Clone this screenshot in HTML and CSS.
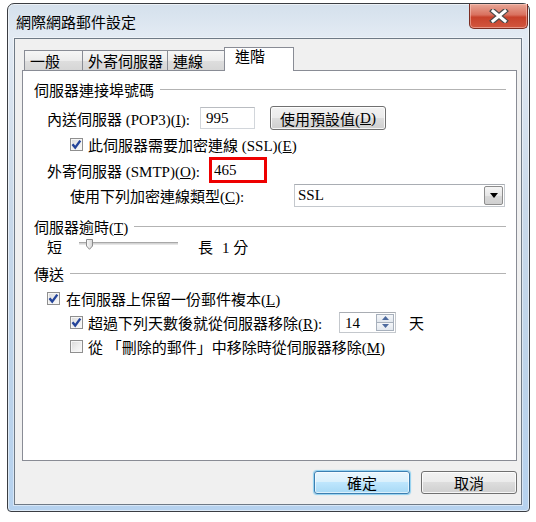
FILE: index.html
```html
<!DOCTYPE html>
<html lang="zh-Hant">
<head>
    <meta charset="UTF-8">
    <title>網際網路郵件設定</title>
    <link rel="stylesheet" href="styles.css">
</head>
<body>
    <div class="window">
        <div class="titlebar">
            <span class="title">網際網路郵件設定</span>
            <div class="close-btn">
                <svg width="20" height="14" viewBox="0 0 20 14">
                    <path d="M4 2 L16 12 M16 2 L4 12" stroke="#4a4a4a" stroke-width="5.5" stroke-linecap="square"/>
                    <path d="M4 2 L16 12 M16 2 L4 12" stroke="#ffffff" stroke-width="3" stroke-linecap="square"/>
                </svg>
            </div>
        </div>

        <div class="client">
            <div class="tabs">
                <div class="tab tab-general">一般</div>
                <div class="tab tab-outgoing">外寄伺服器</div>
                <div class="tab tab-conn">連線</div>
                <div class="tab tab-advanced active">進階</div>
            </div>

            <div class="panel">
                <div class="group-title"><span>伺服器連接埠號碼</span><i class="rule"></i></div>

                <div class="row row-pop">
                    <span class="label label-pop">內送伺服器 (POP3)(<u>I</u>):</span>
                    <div class="textbox">995</div>
                    <div class="btn btn-defaults">使用預設值(<u>D</u>)</div>
                </div>

                <div class="row row-ssl">
                    <span class="check checked">
                        <svg width="11" height="11" viewBox="0 0 11 11"><path d="M1.5 5.2 L4.2 8.6 L9.3 1.6" fill="none" stroke="#24449a" stroke-width="2.4"/></svg>
                    </span>
                    <span>此伺服器需要加密連線 (SSL)(<u>E</u>)</span>
                </div>

                <div class="row row-smtp">
                    <span class="label label-smtp">外寄伺服器 (SMTP)(<u>O</u>):</span>
                    <div class="textbox marked">465</div>
                </div>

                <div class="row row-enc">
                    <span class="label label-enc">使用下列加密連線類型(<u>C</u>):</span>
                    <div class="select">
                        <span>SSL</span>
                        <span class="select-arrow">
                            <svg width="8" height="5" viewBox="0 0 8 5"><path d="M0 0 H8 L4 5 Z" fill="#000"/></svg>
                        </span>
                    </div>
                </div>

                <div class="group-title group-timeout"><span>伺服器逾時(<u>T</u>)</span><i class="rule"></i></div>

                <div class="row row-slider">
                    <span>短</span>
                    <div class="slider">
                        <div class="track"></div>
                        <svg class="thumb" width="7" height="11" viewBox="0 0 7 11">
                            <defs>
                                <linearGradient id="thumbFill" x1="0" y1="0" x2="1" y2="0">
                                    <stop offset="0" stop-color="#fbfbfb"/>
                                    <stop offset="1" stop-color="#d4d4d4"/>
                                </linearGradient>
                            </defs>
                            <path d="M0.5 0.5 H6.5 V7 L3.5 10.3 L0.5 7 Z" fill="url(#thumbFill)" stroke="#8c8c8c"/>
                        </svg>
                    </div>
                    <span class="long">長</span>
                    <span class="minutes">1 分</span>
                </div>

                <div class="group-title group-send"><span>傳送</span><i class="rule"></i></div>

                <div class="row row-keep">
                    <span class="check checked">
                        <svg width="11" height="11" viewBox="0 0 11 11"><path d="M1.5 5.2 L4.2 8.6 L9.3 1.6" fill="none" stroke="#24449a" stroke-width="2.4"/></svg>
                    </span>
                    <span>在伺服器上保留一份郵件複本(<u>L</u>)</span>
                </div>

                <div class="row row-days">
                    <span class="check checked">
                        <svg width="11" height="11" viewBox="0 0 11 11"><path d="M1.5 5.2 L4.2 8.6 L9.3 1.6" fill="none" stroke="#24449a" stroke-width="2.4"/></svg>
                    </span>
                    <span class="label label-days">超過下列天數後就從伺服器移除(<u>R</u>):</span>
                    <div class="spinner">
                        <span class="spin-value">14</span>
                        <span class="spin-btns">
                            <span class="spin-up"><svg width="7" height="4" viewBox="0 0 7 4"><path d="M0 4 L3.5 0 L7 4 Z" fill="#4d6a9e"/></svg></span>
                            <span class="spin-down"><svg width="7" height="4" viewBox="0 0 7 4"><path d="M0 0 L3.5 4 L7 0 Z" fill="#4d6a9e"/></svg></span>
                        </span>
                    </div>
                    <span class="days-unit">天</span>
                </div>

                <div class="row row-deleted">
                    <span class="check"></span>
                    <span>從 「刪除的郵件」中移除時從伺服器移除(<u>M</u>)</span>
                </div>
            </div>

            <div class="actions">
                <div class="btn btn-dialog btn-ok">確定</div>
                <div class="btn btn-dialog">取消</div>
            </div>
        </div>
    </div>
</body>
</html>
```

FILE: styles.css
```css
body {
    margin: 0;
    background: #ffffff;
    font-family: "Liberation Serif", "Noto Sans CJK TC", serif;
    font-size: 15px;
    color: #000;
}

u {
    text-decoration: underline;
    text-underline-offset: 1px;
}

.window {
    margin: 3px 0 0 7px;
    width: 523px;
    height: 509px;
    box-sizing: border-box;
    border: 1px solid #3a3d42;
    border-radius: 7px 7px 4px 4px;
    background: linear-gradient(180deg, #d4e0ec 0%, #e2eaf3 6%, #c9d9ea 40%, #bcd3ea 75%, #b6d2ef 100%);
    box-shadow: inset 0 0 0 1px rgba(255, 255, 255, 0.55);
    display: flex;
    flex-direction: column;
}

.titlebar {
    height: 34px;
    display: flex;
    justify-content: space-between;
    padding: 0 1px 0 8px;
}

.title {
    font-size: 15px;
    padding-top: 10px;
    line-height: 18px;
}

.close-btn {
    width: 59px;
    height: 25px;
    box-sizing: border-box;
    border: 1px solid #7b2d22;
    border-top: none;
    border-radius: 0 0 5px 5px;
    background: linear-gradient(180deg, #e8a797 0%, #d9715f 45%, #c7412b 55%, #d2573f 100%);
    box-shadow: inset 0 0 0 1px rgba(255, 210, 200, 0.5);
    display: flex;
    align-items: center;
    justify-content: center;
}

.client {
    flex: 1;
    margin: 0 7px 6px 6px;
    border: 1px solid #6f7a86;
    background: #f0f0f0;
    box-shadow: 0 0 0 1px rgba(255, 255, 255, 0.45);
    padding: 8px 4px 0 7px;
    display: flex;
    flex-direction: column;
}

/* tabs */
.tabs {
    height: 23px;
    display: flex;
    align-items: flex-end;
    padding-left: 2px;
}

.tab {
    height: 20px;
    box-sizing: border-box;
    border: 1px solid #898c95;
    border-bottom: none;
    background: linear-gradient(180deg, #f6f6f6 0%, #ececec 50%, #dedede 51%, #d6d6d6 100%);
    padding: 3px 0 0 5px;
    line-height: 17px;
    margin-right: -1px;
}

.tab-general { width: 59px; }
.tab-outgoing { width: 86px; }
.tab-conn { width: 58px; }

.tab.active {
    width: 70px;
    height: 24px;
    margin: 0 0 -1px 0;
    background: #ffffff;
    padding: 1px 0 0 10px;
    position: relative;
    z-index: 1;
}

.panel {
    height: 391px;
    box-sizing: border-box;
    border: 1px solid #898c95;
    background: #ffffff;
    padding: 8px 10px 0 11px;
}

.group-title {
    height: 20px;
    display: flex;
    align-items: center;
}

.rule {
    flex: 1;
    height: 1px;
    margin-left: 6px;
    background: #b3b3b3;
}

.row {
    display: flex;
    align-items: center;
    height: 24px;
}

.label {
    flex-shrink: 0;
    white-space: nowrap;
}

/* server ports */
.row-pop {
    height: 26px;
    margin-top: 6px;
    padding-left: 13px;
}

.label-pop { width: 153px; }

.textbox {
    width: 55px;
    height: 22px;
    box-sizing: border-box;
    border: 1px solid #d2d6db;
    border-top-color: #b9bcc1;
    padding: 1px 0 0 5px;
    line-height: 19px;
    background: #fff;
}

.btn {
    box-sizing: border-box;
    border: 1px solid #707070;
    border-radius: 3px;
    background: linear-gradient(180deg, #f2f2f2 0%, #ebebeb 49%, #dddddd 50%, #cfcfcf 100%);
    box-shadow: inset 0 0 0 1px rgba(255, 255, 255, 0.8);
    display: flex;
    align-items: center;
    justify-content: center;
    white-space: nowrap;
}

.btn-defaults {
    width: 116px;
    height: 24px;
    margin-left: 15px;
}

.row-ssl {
    height: 26px;
    padding-left: 36px;
}

.check {
    width: 13px;
    height: 13px;
    box-sizing: border-box;
    border: 1px solid #8f8f8f;
    background: linear-gradient(135deg, #d9d9d9 0%, #eeeeee 55%, #fbfbfb 100%);
    box-shadow: inset 0 0 0 1px #f6f6f6;
    margin-right: 5px;
    flex-shrink: 0;
    display: flex;
    align-items: center;
    justify-content: center;
}

.check svg {
    display: block;
}

.row-smtp {
    height: 26px;
    padding-left: 13px;
}

.label-smtp { width: 162px; }

.textbox.marked {
    width: 58px;
    height: 26px;
    border: 3px solid #ee0000;
    padding: 0 0 0 2px;
    line-height: 20px;
}

.row-enc {
    padding-left: 36px;
}

.label-enc { width: 224px; }

.select {
    width: 211px;
    height: 23px;
    box-sizing: border-box;
    border: 1px solid #c4c8cd;
    border-top-color: #a9adb3;
    background: #fff;
    display: flex;
    align-items: center;
    justify-content: space-between;
    padding: 0 1px 0 3px;
}

.select-arrow {
    width: 19px;
    height: 19px;
    box-sizing: border-box;
    border: 1px solid #8d8d8d;
    border-radius: 2px;
    background: linear-gradient(180deg, #f5f5f5 0%, #e7e7e7 50%, #d9d9d9 51%, #d0d0d0 100%);
    display: flex;
    align-items: center;
    justify-content: center;
}

/* timeout */
.group-timeout {
    margin-top: 9px;
}

.row-slider {
    height: 20px;
    padding-left: 13px;
}

.slider {
    width: 99px;
    height: 20px;
    margin-left: 17px;
    position: relative;
}

.track {
    margin-top: 6px;
    height: 3px;
    box-sizing: border-box;
    border-top: 1px solid #a8a8a8;
    border-bottom: 1px solid #e6e6e6;
    background: #d4d4d4;
}

.thumb {
    position: absolute;
    left: 7px;
    top: 3px;
}

.long {
    margin-left: 20px;
}

.minutes {
    margin-left: 9px;
}

/* send */
.group-send {
    margin-top: 7px;
}

.row-keep {
    margin-top: 3px;
    padding-left: 13px;
}

.row-keep .check {
    margin-right: 6px;
}

.row-days {
    padding-left: 36px;
}

.label-days { width: 251px; }

.spinner {
    width: 57px;
    height: 21px;
    box-sizing: border-box;
    border: 1px solid #c4c8cd;
    border-top-color: #a9adb3;
    background: #fff;
    display: flex;
    justify-content: space-between;
    padding: 1px;
}

.spin-value {
    padding-left: 4px;
    line-height: 18px;
}

.spin-btns {
    width: 18px;
    display: flex;
    flex-direction: column;
}

.spin-up, .spin-down {
    flex: 1;
    box-sizing: border-box;
    border: 1px solid #a7b0bc;
    background: linear-gradient(180deg, #f4f6f9 0%, #e3e8ee 100%);
    display: flex;
    align-items: center;
    justify-content: center;
}

.spin-down {
    margin-top: -1px;
}

.days-unit {
    margin-left: 13px;
}

.row-deleted {
    padding-left: 36px;
}

/* dialog buttons */
.actions {
    display: flex;
    justify-content: flex-end;
    gap: 11px;
    margin-top: 10px;
}

.btn-dialog {
    width: 96px;
    height: 23px;
}

.btn-ok {
    border-color: #3c7fb1;
    background: linear-gradient(180deg, #eaf6fd 0%, #d9f0fc 49%, #bee6fd 50%, #a7d9f5 100%);
    box-shadow: inset 0 0 0 1px rgba(255, 255, 255, 0.6), 0 0 1px 1px #8fd0f0;
}
```
